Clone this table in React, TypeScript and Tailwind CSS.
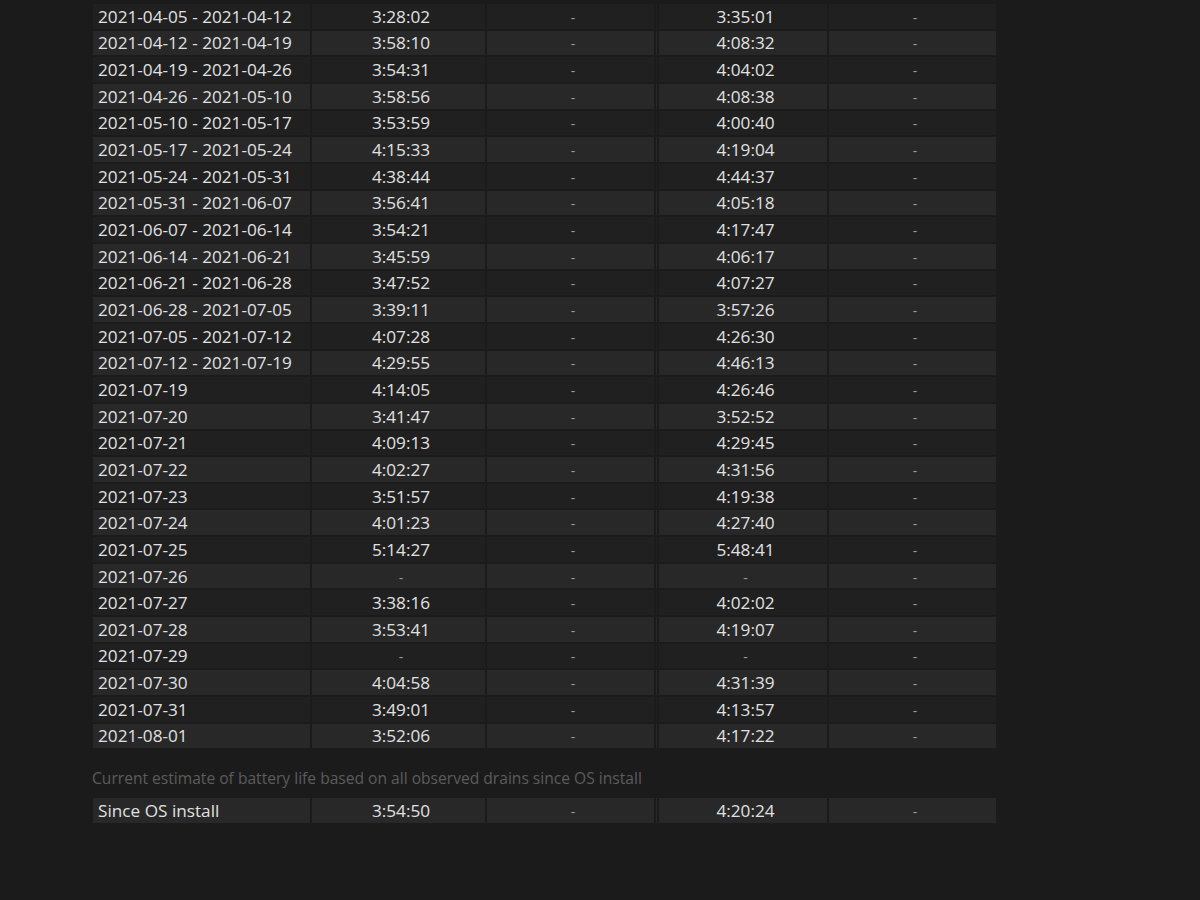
// Battery life estimates table - dark theme powercfg report

const rows: [string, string, string][] = [
  ["2021-04-05 - 2021-04-12", "3:28:02", "3:35:01"],
  ["2021-04-12 - 2021-04-19", "3:58:10", "4:08:32"],
  ["2021-04-19 - 2021-04-26", "3:54:31", "4:04:02"],
  ["2021-04-26 - 2021-05-10", "3:58:56", "4:08:38"],
  ["2021-05-10 - 2021-05-17", "3:53:59", "4:00:40"],
  ["2021-05-17 - 2021-05-24", "4:15:33", "4:19:04"],
  ["2021-05-24 - 2021-05-31", "4:38:44", "4:44:37"],
  ["2021-05-31 - 2021-06-07", "3:56:41", "4:05:18"],
  ["2021-06-07 - 2021-06-14", "3:54:21", "4:17:47"],
  ["2021-06-14 - 2021-06-21", "3:45:59", "4:06:17"],
  ["2021-06-21 - 2021-06-28", "3:47:52", "4:07:27"],
  ["2021-06-28 - 2021-07-05", "3:39:11", "3:57:26"],
  ["2021-07-05 - 2021-07-12", "4:07:28", "4:26:30"],
  ["2021-07-12 - 2021-07-19", "4:29:55", "4:46:13"],
  ["2021-07-19", "4:14:05", "4:26:46"],
  ["2021-07-20", "3:41:47", "3:52:52"],
  ["2021-07-21", "4:09:13", "4:29:45"],
  ["2021-07-22", "4:02:27", "4:31:56"],
  ["2021-07-23", "3:51:57", "4:19:38"],
  ["2021-07-24", "4:01:23", "4:27:40"],
  ["2021-07-25", "5:14:27", "5:48:41"],
  ["2021-07-26", "-", "-"],
  ["2021-07-27", "3:38:16", "4:02:02"],
  ["2021-07-28", "3:53:41", "4:19:07"],
  ["2021-07-29", "-", "-"],
  ["2021-07-30", "4:04:58", "4:31:39"],
  ["2021-07-31", "3:49:01", "4:13:57"],
  ["2021-08-01", "3:52:06", "4:17:22"],
]

function Val({ v }: { v: string }) {
  if (v === "-") return <span className="text-[#9a9a9a] text-[14px]">-</span>
  return <span>{v}</span>
}

function Row({ cells, bg }: { cells: [string, string, string]; bg: string }) {
  const td = `${bg} h-[24.67px] p-0 pl-[5px] leading-none`
  return (
    <tr>
      <td className={`${td} text-left`}>{cells[0]}</td>
      <td className={`${td} text-center`}>
        <Val v={cells[1]} />
      </td>
      <td className={`${td} text-center`}>
        <Val v="-" />
      </td>
      <td className={`${bg} p-0`}></td>
      <td className={`${td} text-center`}>
        <Val v={cells[2]} />
      </td>
      <td className={`${td} text-center`}>
        <Val v="-" />
      </td>
    </tr>
  )
}

function Cols() {
  return (
    <colgroup>
      <col className="w-[217px]" />
      <col className="w-[173px]" />
      <col className="w-[167px]" />
      <col className="w-[1px]" />
      <col className="w-[168px]" />
      <col className="w-[167px]" />
    </colgroup>
  )
}

export default function App() {
  return (
    <div
      className="w-[1200px] h-[900px] overflow-hidden bg-[#1b1b1b] text-[#e0e0e0] text-[17.2px]"
      style={{ fontFamily: '"Open Sans", "Noto Sans", sans-serif' }}
    >
      <div className="pl-[91px] pt-[2px]">
        <table className="table-fixed border-separate border-spacing-[2px] w-[907px]">
          <Cols />
          <tbody>
            {rows.map((r, i) => (
              <Row key={r[0]} cells={r} bg={i % 2 === 0 ? "bg-[#202020]" : "bg-[#282828]"} />
            ))}
          </tbody>
        </table>

        <p className="pl-px mt-[18px] text-[#5c5c5c] text-[15.6px] leading-5">
          Current estimate of battery life based on all observed drains since OS install
        </p>

        <table className="mt-[8px] table-fixed border-separate border-spacing-[2px] w-[907px]">
          <Cols />
          <tbody>
            <Row cells={["Since OS install", "3:54:50", "4:20:24"]} bg="bg-[#282828]" />
          </tbody>
        </table>
      </div>
    </div>
  )
}
